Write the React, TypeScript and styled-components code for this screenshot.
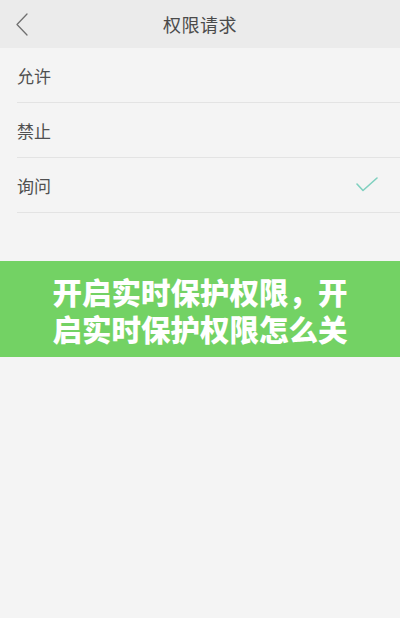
import React from "react"
import styled, { createGlobalStyle } from "styled-components"

const GlobalStyle = createGlobalStyle`
html, body {
  margin: 0;
  padding: 0;
  background: #f4f4f4;
}
body {
  font-family: "Noto Sans CJK SC", "Noto Sans", sans-serif;
}
`;

const Page = styled.div`
width: 400px;
min-height: 618px;
background: #f4f4f4;
display: flex;
flex-direction: column;
`;

const Header = styled.header`
height: 48px;
background: #ebebeb;
display: grid;
grid-template-columns: 48px 1fr 48px;
align-items: center;
`;

const BackButton = styled.div`
display: flex;
align-items: center;
padding-left: 14px;
height: 100%;
`;

const Title = styled.h1`
margin: 0;
text-align: center;
font-size: 18px;
font-weight: 400;
color: #4a4a4a;
letter-spacing: 0.5px;
`;

const OptionList = styled.ul`
margin: 0;
padding: 0 0 0 17px;
list-style: none;
`;

const OptionRow = styled.li`
height: 54px;
display: flex;
align-items: center;
justify-content: space-between;
padding-right: 22px;
border-bottom: 1px solid #e3e3e3;
font-size: 17px;
color: #505050;
`;

const Banner = styled.div`
margin-top: 48px;
height: 96px;
box-sizing: border-box;
background: #73d264;
padding: 12px 50px 10px;
display: flex;
align-items: flex-start;
justify-content: center;
`;

const BannerText = styled.p`
margin: 0;
text-align: center;
color: #fff;
font-size: 29.5px;
line-height: 37px;
font-weight: 900;
`;

const options = [
  { label: "允许", checked: false },
  { label: "禁止", checked: false },
  { label: "询问", checked: true },
];

const App = () => {
  return (
    <>
      <GlobalStyle />
      <Page>
        <Header>
          <BackButton>
            <svg width="16" height="24" viewBox="0 0 16 24">
              <polyline points="13,2 3,12.5 13,23" fill="none" stroke="#707070" strokeWidth="1.3" strokeLinecap="round" strokeLinejoin="round" />
            </svg>
          </BackButton>
          <Title>权限请求</Title>
          <div />
        </Header>
        <OptionList>
          {options.map((o) => (
            <OptionRow key={o.label}>
              <span>{o.label}</span>
              {o.checked && (
                <svg width="22" height="16" viewBox="0 0 22 16">
                  <polyline points="1,7 7,13.5 21,1" fill="none" stroke="#7fd0bf" strokeWidth="1.6" strokeLinecap="round" strokeLinejoin="round" />
                </svg>
              )}
            </OptionRow>
          ))}
        </OptionList>
        <Banner>
          <BannerText>开启实时保护权限，开启实时保护权限怎么关</BannerText>
        </Banner>
      </Page>
    </>
  )
}

export default App;
